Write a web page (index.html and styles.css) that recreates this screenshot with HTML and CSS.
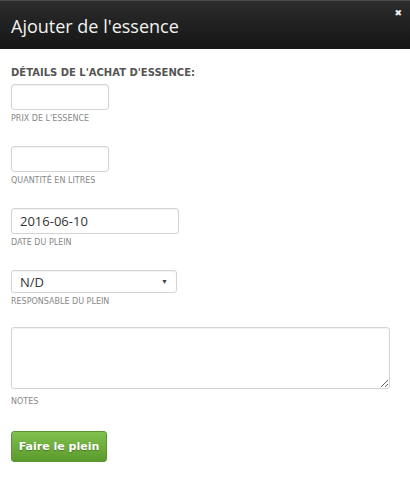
FILE: index.html
```html
<!DOCTYPE html>
<html lang="fr">
<head>
    <meta charset="UTF-8">
    <title>Ajouter de l'essence</title>
    <link rel="stylesheet" href="styles.css">
</head>
<body>
    <div class="modal">
        <div class="modal-header">
            <h2>Ajouter de l'essence</h2>
            <span class="close">&#10006;</span>
        </div>
        <div class="modal-body">
            <h3>DÉTAILS DE L'ACHAT D'ESSENCE:</h3>

            <div class="field">
                <input type="text" class="small">
                <label>PRIX DE L'ESSENCE</label>
            </div>

            <div class="field">
                <input type="text" class="small">
                <label>QUANTITÉ EN LITRES</label>
            </div>

            <div class="field">
                <input type="text" class="medium" value="2016-06-10">
                <label>DATE DU PLEIN</label>
            </div>

            <div class="field select-field">
                <div class="select">
                    <span>N/D</span>
                    <span class="arrow">&#9660;</span>
                </div>
                <label>RESPONSABLE DU PLEIN</label>
            </div>

            <div class="field notes">
                <textarea></textarea>
                <label>NOTES</label>
            </div>

            <button class="submit-btn">Faire le plein</button>
        </div>
    </div>
</body>
</html>
```

FILE: styles.css
```css
body {
    margin: 0;
    background-color: white;
    font-family: "DejaVu Sans", Verdana, sans-serif;
}
.modal {
    width: 410px;
    height: 484px;
    background-color: white;
}
.modal-header {
    position: relative;
    background: linear-gradient(#2c2c2c, #151515);
    border-top: 1px solid #4a4a4a;
    box-sizing: border-box;
    height: 49px;
    display: flex;
    align-items: center;
    padding: 0 11px;
}
.modal-header h2 {
    margin: 0;
    color: #f2f2f2;
    font-family: "Open Sans", sans-serif;
    font-weight: normal;
    font-size: 18px;
    padding-top: 2px;
}
.close {
    position: absolute;
    top: 7px;
    right: 8px;
    color: #f0f0f0;
    font-size: 9px;
    font-weight: bold;
}
.modal-body {
    padding: 18px 11px 0;
}
h3 {
    margin: 0 0 6px;
    font-size: 10px;
    font-weight: bold;
    color: #555;
    letter-spacing: 0;
}
.field {
    margin-bottom: 23px;
}
.field label {
    display: block;
    margin-top: 4px;
    font-size: 8px;
    color: #888;
    letter-spacing: 0;
}
input, .select, textarea {
    box-sizing: border-box;
    border: 1px solid #d4d4d4;
    border-radius: 3px;
    box-shadow: inset 0 1px 1px rgba(0,0,0,0.05);
    font-family: "Open Sans", sans-serif;
    font-size: 13px;
    color: #333;
    display: block;
    margin: 0;
}
input.small {
    width: 98px;
    height: 26px;
}
input.medium {
    width: 168px;
    height: 26px;
    padding: 0 8px;
}
.select {
    width: 166px;
    height: 23px;
    display: flex;
    align-items: center;
    justify-content: space-between;
    padding: 0 8px;
}
.select .arrow {
    font-size: 7px;
    color: #444;
}
.select-field {
    margin-bottom: 21px;
}
textarea {
    width: 379px;
    height: 62px;
    resize: vertical;
}
.notes label {
    margin-top: 8px;
}
.notes {
    margin-bottom: 25px;
}
.submit-btn {
    width: 96px;
    height: 31px;
    background: linear-gradient(#80c04e, #5b9a2c);
    border: 1px solid #5d9431;
    border-radius: 3px;
    color: white;
    font-family: "DejaVu Sans", sans-serif;
    font-weight: bold;
    font-size: 11px;
    text-shadow: 0 1px 1px rgba(0,0,0,0.3);
    padding: 0;
}
```
